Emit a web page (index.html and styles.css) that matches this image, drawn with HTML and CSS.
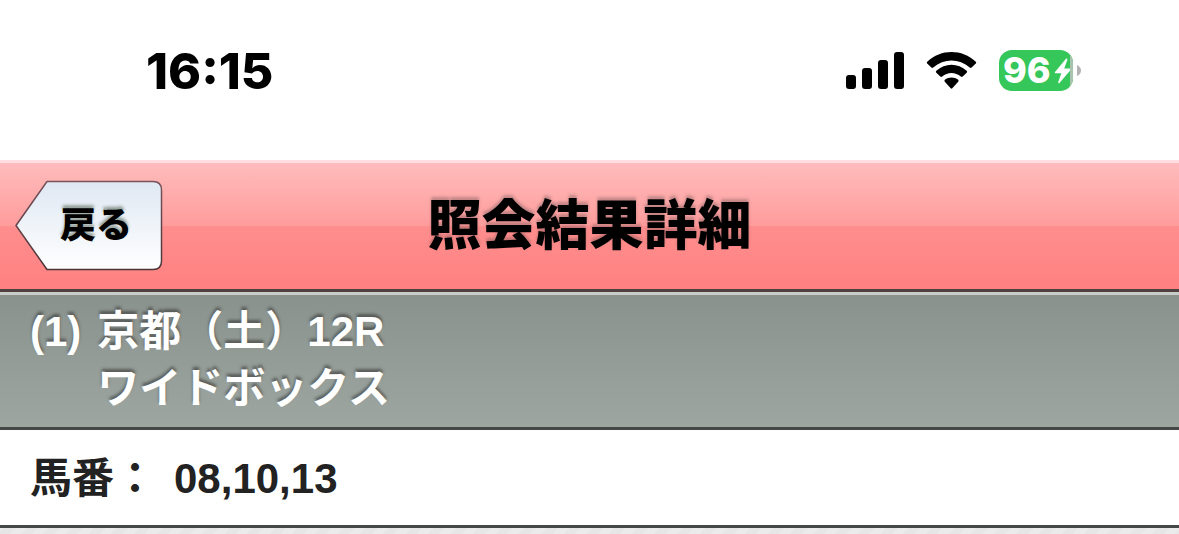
FILE: index.html
```html
<!DOCTYPE html>
<html lang="ja">
<head>
<meta charset="utf-8">
<meta name="viewport" content="width=device-width, initial-scale=1">
<title>照会結果詳細</title>
<link rel="stylesheet" href="styles.css">
</head>
<body>
<div class="status">
  <time class="clock">16:15</time>
  <div class="indicators">
    <svg class="signal" width="60" height="40" viewBox="0 0 60 40" aria-hidden="true">
      <rect x="1" y="25" width="10" height="14" rx="3"/>
      <rect x="17" y="18" width="10" height="21" rx="3"/>
      <rect x="33" y="10" width="10" height="29" rx="3"/>
      <rect x="49" y="2" width="10" height="37" rx="3"/>
    </svg>
    <svg class="wifi" width="52" height="40" viewBox="0 0 52 40" aria-hidden="true">
      <path d="M1.2 11.8Q0.4 12.800 1.2 13.600L5.4 17.600Q6.2 18.400 7.2 17.500C18 8.3 33 8.3 43.800 17.500Q44.800 18.400 45.600 17.600L49.800 13.600Q50.600 12.800 49.800 11.800C36 -1.2 15 -1.2 1.200 11.800Z"/>
      <path d="M10.300 20.800Q9.400 21.900 10.300 22.700L14.300 26.500Q15.200 27.300 16.200 26.500C21.500 21.800 29.500 21.800 34.800 26.500Q35.800 27.300 36.700 26.500L40.700 22.700Q41.600 21.900 40.700 20.800C32 12.800 19 12.800 10.300 20.800Z"/>
      <path d="M18.800 29.800Q18 30.800 18.800 31.700L24.700 38.300Q25.500 39.100 26.300 38.300L32.200 31.700Q33 30.800 32.200 29.800C28.300 26.600 22.700 26.600 18.800 29.800Z"/>
    </svg>
    <div class="battery">
      <span class="level">96</span>
      <svg class="bolt" width="18" height="26" viewBox="0 0 18 26" aria-hidden="true">
        <path d="M12.200 0.600L1 14Q0.300 15.200 1.600 15.200H7.300L4.200 24.300Q4.200 25.700 5.500 24.900L17 11.600Q17.600 10.400 16.300 10.400H10.200L13.400 1.700Q13.500 0 12.200 0.600Z"/>
      </svg>
      <svg class="cap" width="13" height="41" viewBox="0 0 13 41" aria-hidden="true">
        <path d="M0 5Q3 8 3 13V28Q3 33 0 36Z" fill="#a9c4ae"/>
        <path d="M7 15Q11 17 11 20.500Q11 24 7 26Z" fill="#b3b3b5"/>
      </svg>
    </div>
  </div>
</div>
<header class="titlebar">
  <button class="back" type="button">
    <svg class="back-shape" width="148" height="92" viewBox="0 0 148 92" aria-hidden="true">
      <defs>
        <linearGradient id="face" x1="0" y1="0" x2="0" y2="1">
          <stop offset="0" stop-color="#dfe8f3"/>
          <stop offset="1" stop-color="#ffffff"/>
        </linearGradient>
        <linearGradient id="edge" x1="0" y1="0" x2="0" y2="1">
          <stop offset="0" stop-color="#77525a"/>
          <stop offset="1" stop-color="#4a3438"/>
        </linearGradient>
      </defs>
      <path d="M32 1.500H138Q146.500 1.500 146.500 10V81Q146.500 89.500 138 89.500H32L1 45.500Z" fill="url(#face)" stroke="url(#edge)" stroke-width="1.500" stroke-linejoin="round"/>
    </svg>
    <span class="back-label">戻る</span>
  </button>
  <h1 class="title">照会結果詳細</h1>
</header>
<main>
  <h2 class="race">
    <span>(1)</span>
    <span class="race-name">京都（土）12R<br>ワイドボックス</span>
  </h2>
  <dl class="numbers">
    <dt>馬番：</dt>
    <dd>08,10,13</dd>
  </dl>
</main>
</body>
</html>
```

FILE: styles.css
```css
* {
  box-sizing: border-box;
}

body {
  margin: 0;
  min-height: 100vh;
  font-family: "Liberation Sans", "Noto Sans CJK JP", sans-serif;
  background: repeating-linear-gradient(135deg, #ebebeb 0 8px, #e6e6e6 8px 16px);
}

.status {
  display: flex;
  align-items: flex-start;
  justify-content: space-between;
  height: 160px;
  padding: 50px 98px 0 146px;
  background: #fff;
}

.clock {
  font: 800 50px/42px Inter, sans-serif;
  font-variation-settings: "opsz" 14;
  color: #000;
}

.indicators {
  display: flex;
  align-items: flex-start;
  gap: 21px;
}

.battery {
  position: relative;
  display: flex;
  align-items: center;
  gap: 3px;
  width: 74px;
  height: 41px;
  margin-right: 8px;
  padding-left: 4px;
  border-radius: 13px;
  background: #35c759;
  color: #fff;
}

.level {
  font: 800 36px/41px Inter, sans-serif;
}

.bolt {
  flex: none;
  fill: #fff;
}

.cap {
  position: absolute;
  top: 0;
  left: 71px;
}

.titlebar {
  position: relative;
  display: flex;
  align-items: center;
  justify-content: center;
  height: 132px;
  padding-bottom: 8px;
  border-top: 3px solid #ffdde0;
  border-bottom: 3px solid #50403f;
  background: linear-gradient(#ffbcbc, #ff9c9c 50%, #ff8e8e 50%, #ff8080);
}

.back {
  position: absolute;
  top: 17px;
  left: 15px;
  width: 148px;
  height: 92px;
  padding: 0 0 8px 14px;
  border: 0;
  background: none;
  color: #000;
  font: 900 36px/48px "Noto Sans CJK JP", sans-serif;
  text-shadow: 0 -3px 3px rgba(60, 80, 60, 0.5);
  cursor: pointer;
}

.back-shape {
  position: absolute;
  inset: 0;
}

.back-label {
  position: relative;
}

.title {
  margin: 0;
  color: #000;
  font: 900 54px/78px "Noto Sans CJK JP", sans-serif;
  text-shadow: 0 -3px 3px rgba(80, 70, 70, 0.35);
}

.race {
  display: flex;
  gap: 16px;
  margin: 0;
  padding: 8px 30px 10px;
  border-top: 3px solid #c8cdca;
  border-bottom: 3px solid #464847;
  background: linear-gradient(#8a928d, #9da6a1);
  color: #fff;
  font-size: 42px;
  line-height: 57px;
  text-shadow: 0 -3px 3px rgba(50, 50, 50, 0.6);
}

.numbers {
  display: flex;
  gap: 18px;
  margin: 0;
  padding: 21px 30px 19px;
  border-bottom: 3px solid #464847;
  background: #fff;
  color: #222;
  font-size: 42px;
  font-weight: 700;
  line-height: 55px;
}

.numbers dd {
  margin: 0;
}
```
